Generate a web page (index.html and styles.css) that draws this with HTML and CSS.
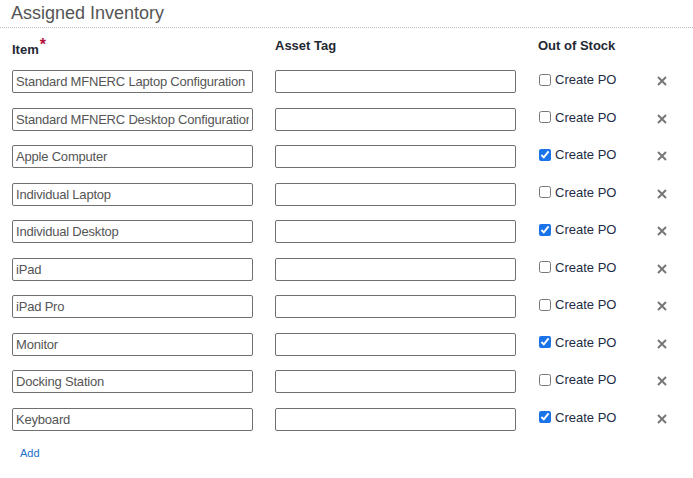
FILE: index.html
```html
<!DOCTYPE html>
<html>
<head>
<meta charset="utf-8">
<link rel="stylesheet" href="styles.css">
</head>
<body>
<div class="panel">
  <h2 class="title">Assigned Inventory</h2>
  <div class="grid">
    <div class="head first"><span>Item</span><span class="req">*</span></div>
    <div class="head">Asset Tag</div>
    <div class="head">Out of Stock</div>
    <div></div>

    <input class="field" type="text" value="Standard MFNERC Laptop Configuration">
    <input class="field" type="text" value="">
    <label class="po"><input type="checkbox"> Create PO</label>
    <span class="del"><svg viewBox="0 0 10 10" width="10" height="10"><path d="M1 1L9 9M9 1L1 9"/></svg></span>

    <input class="field" type="text" value="Standard MFNERC Desktop Configuration">
    <input class="field" type="text" value="">
    <label class="po"><input type="checkbox"> Create PO</label>
    <span class="del"><svg viewBox="0 0 10 10" width="10" height="10"><path d="M1 1L9 9M9 1L1 9"/></svg></span>

    <input class="field" type="text" value="Apple Computer">
    <input class="field" type="text" value="">
    <label class="po"><input type="checkbox" checked> Create PO</label>
    <span class="del"><svg viewBox="0 0 10 10" width="10" height="10"><path d="M1 1L9 9M9 1L1 9"/></svg></span>

    <input class="field" type="text" value="Individual Laptop">
    <input class="field" type="text" value="">
    <label class="po"><input type="checkbox"> Create PO</label>
    <span class="del"><svg viewBox="0 0 10 10" width="10" height="10"><path d="M1 1L9 9M9 1L1 9"/></svg></span>

    <input class="field" type="text" value="Individual Desktop">
    <input class="field" type="text" value="">
    <label class="po"><input type="checkbox" checked> Create PO</label>
    <span class="del"><svg viewBox="0 0 10 10" width="10" height="10"><path d="M1 1L9 9M9 1L1 9"/></svg></span>

    <input class="field" type="text" value="iPad">
    <input class="field" type="text" value="">
    <label class="po"><input type="checkbox"> Create PO</label>
    <span class="del"><svg viewBox="0 0 10 10" width="10" height="10"><path d="M1 1L9 9M9 1L1 9"/></svg></span>

    <input class="field" type="text" value="iPad Pro">
    <input class="field" type="text" value="">
    <label class="po"><input type="checkbox"> Create PO</label>
    <span class="del"><svg viewBox="0 0 10 10" width="10" height="10"><path d="M1 1L9 9M9 1L1 9"/></svg></span>

    <input class="field" type="text" value="Monitor">
    <input class="field" type="text" value="">
    <label class="po"><input type="checkbox" checked> Create PO</label>
    <span class="del"><svg viewBox="0 0 10 10" width="10" height="10"><path d="M1 1L9 9M9 1L1 9"/></svg></span>

    <input class="field" type="text" value="Docking Station">
    <input class="field" type="text" value="">
    <label class="po"><input type="checkbox"> Create PO</label>
    <span class="del"><svg viewBox="0 0 10 10" width="10" height="10"><path d="M1 1L9 9M9 1L1 9"/></svg></span>

    <input class="field" type="text" value="Keyboard">
    <input class="field" type="text" value="">
    <label class="po"><input type="checkbox" checked> Create PO</label>
    <span class="del"><svg viewBox="0 0 10 10" width="10" height="10"><path d="M1 1L9 9M9 1L1 9"/></svg></span>
  </div>
  <a class="add" href="#">Add</a>
</div>
</body>
</html>
```

FILE: styles.css
```css
html, body {
  margin: 0;
  padding: 0;
  background: #fff;
  font-family: "Liberation Sans", Arial, sans-serif;
}
.panel {
  width: 693px;
}
.title {
  margin: 0;
  padding: 3px 0 0 11px;
  height: 24px;
  font-size: 18px;
  font-weight: normal;
  line-height: 21px;
  color: #555;
  border-bottom: 1px dotted #bbb;
}
.grid {
  display: grid;
  grid-template-columns: 241px 241px 96px 30px;
  column-gap: 22px;
  row-gap: 14.5px;
  padding: 10px 0 0 12px;
  align-items: start;
}
.head {
  box-sizing: border-box;
  height: 17.5px;
  font-size: 13px;
  font-weight: bold;
  color: #1f2933;
  line-height: 16px;
}
.head.first {
  padding-top: 3px;
}
.req {
  color: #b0103a;
  font-size: 16px;
  position: relative;
  top: -4px;
  margin-left: 1px;
}
.field {
  box-sizing: border-box;
  width: 241px;
  height: 23px;
  margin: 0;
  padding: 0 3px;
  border: 1px solid #707070;
  border-radius: 2px;
  font-family: "Liberation Sans", Arial, sans-serif;
  font-size: 13px;
  letter-spacing: -0.2px;
  color: #555;
  background: #fff;
  overflow: hidden;
}
.po {
  display: flex;
  align-items: center;
  gap: 4px;
  margin-top: 2px;
  font-size: 13px;
  color: #1e2c44;
  line-height: 15px;
}
.po input {
  margin: 0 0 0 1px;
  width: 12px;
  height: 12px;
  accent-color: #1a73e8;
}
.del {
  display: block;
  margin-top: 6px;
  margin-left: 1px;
  width: 10px;
  height: 10px;
}
.del svg {
  display: block;
  stroke: #777;
  stroke-width: 2;
  fill: none;
}
.add {
  display: inline-block;
  margin: 16px 0 0 20px;
  font-size: 11px;
  color: #1d6fc9;
  text-decoration: none;
}
```
